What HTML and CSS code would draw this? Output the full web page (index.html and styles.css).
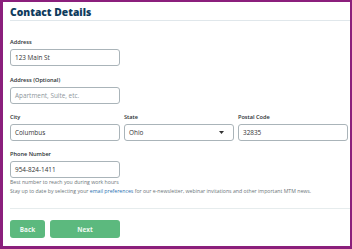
FILE: index.html
```html
<!DOCTYPE html>
<html>
<head>
<meta charset="UTF-8">
<meta name="viewport" content="width=device-width, initial-scale=1.0">
<title>Contact Details</title>
<link rel="stylesheet" href="styles.css">
</head>

<body>
<div class="frame">
    <h1 class="title">Contact Details</h1>
    <form class="form">
        <div class="field">
            <label class="label">Address</label>
            <div class="input">123 Main St</div>
        </div>
        <div class="field">
            <label class="label">Address (Optional)</label>
            <div class="input placeholder">Apartment, Suite, etc.</div>
        </div>
        <div class="row">
            <div class="field">
                <label class="label">City</label>
                <div class="input">Columbus</div>
            </div>
            <div class="field">
                <label class="label">State</label>
                <div class="input select">Ohio
                    <svg class="caret" width="5" height="3" viewBox="0 0 5 3"><path d="M0 0H5L2.5 3Z" fill="#333"/></svg>
                </div>
            </div>
            <div class="field">
                <label class="label">Postal Code</label>
                <div class="input">32835</div>
            </div>
        </div>
        <div class="field">
            <label class="label">Phone Number</label>
            <div class="input">954-824-1411</div>
        </div>
        <p class="hint">Best number to reach you during work hours</p>
        <p class="hint">Stay up to date by selecting your <a href="#">email preferences</a> for our e-newsletter, webinar invitations and other important MTM news.</p>
        <div class="actions">
            <button type="button" class="btn back">Back</button>
            <button type="button" class="btn next">Next</button>
        </div>
    </form>
</div>
</body>
</html>
```

FILE: styles.css
```css
html, body { margin: 0; padding: 0; background: #fff; }
body { font-family: "Open Sans", sans-serif; color: #222; }

.frame {
    box-sizing: border-box;
    width: 352px; height: 249px;
    border: solid #8b1f7c;
    border-width: 2px 2px 3px 3px;
    padding-left: 7px;
}

.title {
    margin: 0; padding-top: 2px;
    font-size: 10.3px; line-height: 16px; font-weight: 800;
    color: #0e3a5c;
    border-bottom: 1.5px solid #e0e7eb;
}

.form { padding-right: 4px; }

.field { display: flex; flex-direction: column; width: 110px; margin-top: 10px; }
.form > .field:first-child { margin-top: 17px; }

.label { font-size: 5.6px; line-height: 9px; font-weight: 600; color: #2a2f33; margin-bottom: 2px; }

.input {
    box-sizing: border-box; height: 17px;
    border: 1px solid #aab4b9; border-radius: 3px;
    padding: 0 4px;
    font-size: 6.4px; line-height: 15px; color: #333;
}
.input.placeholder { color: #8d969b; }
.input.select { display: flex; justify-content: space-between; align-items: center; padding-right: 9px; }

.row { display: grid; grid-template-columns: 110px 110px 110px; column-gap: 4px; }
.row .field { width: auto; margin-top: 9px; }
.row + .field { margin-top: 9px; }

.hint { margin: 0; font-size: 5.2px; line-height: 9px; color: #6c757a; }
.hint a { color: #2b6fb0; text-decoration: none; }

.actions {
    display: flex; gap: 5px;
    margin-right: -4px;
    margin-top: 12px; padding-top: 11px;
    border-top: 1.5px solid #e6eced;
}

.btn {
    height: 18px; border: 0; border-radius: 3px;
    background: #5cb97e; color: #eef8f1;
    font-family: "Open Sans", sans-serif; font-size: 6.4px; font-weight: 700;
    padding: 0;
}
.btn.back { width: 35px; }
.btn.next { width: 70px; }
```
